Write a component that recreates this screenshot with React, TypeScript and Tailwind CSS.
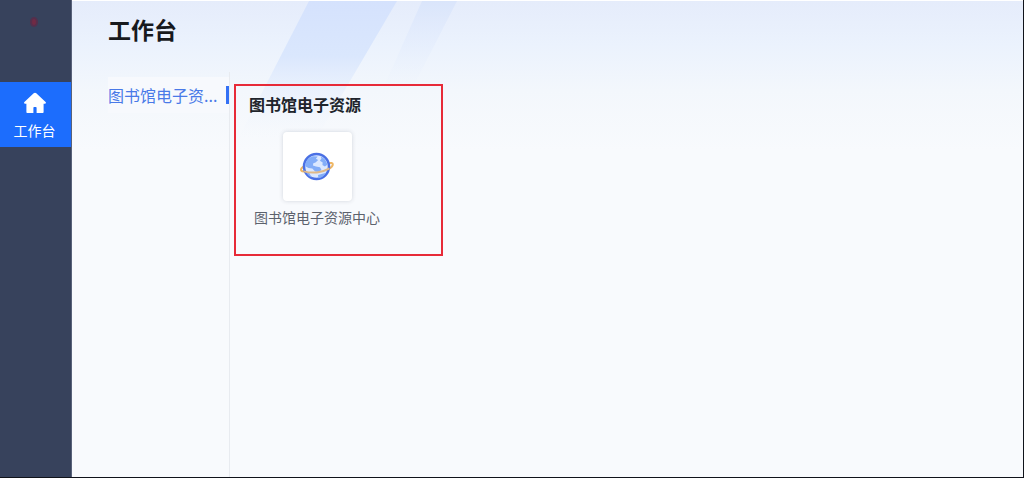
import React, { useState } from 'react';

interface ResourceApp {
  id: string;
  name: string;
  url: string;
}

interface Category {
  id: string;
  name: string;
  apps: ResourceApp[];
}

const CATEGORIES: Category[] = [
  {
    id: 'library',
    name: '图书馆电子资源',
    apps: [{ id: 'library-center', name: '图书馆电子资源中心', url: '#library-center' }]
  }
];

// the side menu only has room for six characters
const shorten = (name: string) => (name.length > 6 ? `${name.slice(0, 6)}...` : name);

const HomeIcon = () => (
  <svg viewBox="0 0 24 22" className="w-6 h-[22px]" fill="currentColor" aria-hidden="true">
    <path d="M12 .8c.5 0 .9.2 1.300.5l9.300 8.800c.7.700.3 1.600-.6 1.600h-1.400v8.300c0 .7-.4 1.100-1.100 1.100h-5.900v-5c0-.6-.4-1-1-1h-1.200c-.6 0-1 .4-1 1v5H4.500c-.7 0-1.100-.4-1.100-1.100v-8.300H2c-.9 0-1.300-.9-.6-1.600l9.300-8.800c.4-.3.800-.5 1.300-.5z" />
  </svg>
);

const GlobeIcon = () => (
  <svg viewBox="0 0 34 30" className="w-[34px] h-[30px]" fill="none" aria-hidden="true">
    <path d="M5 13.500C1.500 15.500.5 17.500 1.300 18.600c.5.700 1.900.9 3.700.8" stroke="#efb765" strokeWidth="2" />
    <path d="M28.500 11.200c2.700-.5 4.200-.1 4.300.8.1 1.700-1.800 3.800-4.600 5.400" stroke="#efb765" strokeWidth="2" />
    <circle cx="16.500" cy="14.500" r="12.500" fill="#dbe8ff" stroke="#4a70e4" strokeWidth="2.500" />
    <path d="M5.500 11c1.300-3.200 4-5.700 7.200-6.800l5 .2-1.800 2.400 2.300 1.100-2.700 2.700-2.200.6-.4 2.300 3.100 1.100 4 .6 1.400 2.500-2.100 2.300-4.200-.4-2.800-3-3.800-.5-3.200-1.800z" fill="#83adf8" />
    <path d="M20.500 4.300c3.600 1.500 6.200 4.600 6.800 8.500l-2.400 1.800-2.500-1.500.3-2.700-2.800-1.700 1.600-2.300z" fill="#83adf8" />
    <path d="M6 19.500l3.200 1.500 2.600 4.500c-2.800-1-4.800-3.100-5.800-6zM18 23l5.500-1.500 2.500-.8c-1.500 3-4.300 5.100-7.600 5.600z" fill="#83adf8" />
    <path d="M4 19.400c7.800 2.200 18 1.500 25.500-3" stroke="#e0b988" strokeWidth="2" />
  </svg>
);

const HeaderArt = () => (
  <svg
    viewBox="0 0 260 150"
    className="absolute left-[164px] top-0 w-[260px] h-[150px] pointer-events-none"
    aria-hidden="true"
  >
    <defs>
      <linearGradient id="wide-band" x1="0" y1="0" x2="0" y2="1">
        <stop offset="0" stopColor="#d5e2fd" />
        <stop offset=".4" stopColor="#dae7fd" />
        <stop offset="1" stopColor="#f3f7fd" stopOpacity="0" />
      </linearGradient>
      <linearGradient id="thin-band" x1="0" y1="0" x2="0" y2="1">
        <stop offset="0" stopColor="#dae5fb" />
        <stop offset="1" stopColor="#eaf2fe" stopOpacity="0" />
      </linearGradient>
    </defs>
    <path d="M73 0h88L80 138H2z" fill="url(#wide-band)" />
    <path d="M186 0h35l-46 90h-29z" fill="url(#thin-band)" />
  </svg>
);

export default function App() {
  const [activeId, setActiveId] = useState('library');
  const active = CATEGORIES.find(c => c.id === activeId) ?? CATEGORIES[0];

  return (
    <div className="flex min-h-screen bg-[#f8fafd] border-r border-b border-[#10131a] font-['Noto_Sans_CJK_SC','Noto_Sans',sans-serif]">
      <aside className="w-[72px] shrink-0 bg-[#37425c] border-r border-[#59627a]">
        <div className="h-[82px] pt-4 pl-[30px]">
          <svg viewBox="0 0 8 12" className="w-2 h-3" aria-hidden="true">
            <ellipse cx="4" cy="6" rx="4" ry="5" fill="#542f4c" />
            <ellipse cx="4" cy="6" rx="2" ry="3" fill="#702b45" />
          </svg>
        </div>
        <nav>
          <a
            href="#workbench"
            aria-current="page"
            className="flex flex-col items-center gap-[6px] h-[65px] pt-[10px] pr-[2px] bg-[#1c6dfd] text-white text-sm leading-5"
          >
            <HomeIcon />
            <span>工作台</span>
          </a>
        </nav>
      </aside>

      <main className="relative flex flex-1 flex-col min-w-0 border-t border-white bg-[linear-gradient(to_bottom,#e5ecfb_0px,#ebf2fd_44px,#f3f7fc_90px,#f8fafd_150px)]">
        <HeaderArt />
        <h1 className="relative h-[71px] pt-3 pl-9 text-[23px] leading-8 font-bold text-[#17191d]">工作台</h1>

        <div className="relative flex flex-1">
          <nav className="w-[158px] shrink-0 pl-9 pt-[5px] border-r border-[#e8ebf0]">
            {CATEGORIES.map(category => (
              <button
                key={category.id}
                type="button"
                title={category.name}
                onClick={() => setActiveId(category.id)}
                className={`flex w-full items-center justify-between h-9 bg-[#f7f9fd] text-base text-left ${
                  category.id === activeId ? 'text-[#4979e8]' : 'text-[#4b5260]'
                }`}
              >
                <span className="whitespace-nowrap">{shorten(category.name)}</span>
                {category.id === activeId && <span className="w-[3px] h-[18px] bg-[#3370f5]" />}
              </button>
            ))}
          </nav>

          <div className="flex-1 min-w-0 pl-1 pt-3">
            <section className="w-[209px] h-[172px] border-2 border-[#e72a38] pt-[6px] pl-[13px]">
              <h2 className="text-base leading-6 font-bold text-[#20242b]">{active.name}</h2>
              <div className="flex flex-wrap pt-4">
                {active.apps.map(app => (
                  <a
                    key={app.id}
                    href={app.url}
                    className="flex flex-col items-center w-[136px] gap-[6px] text-sm leading-5 text-[#5c626d]"
                  >
                    <span className="flex items-center justify-center w-[69px] h-[69px] rounded-sm bg-white shadow-[0_0_4px_rgba(60,70,90,0.2)]">
                      <GlobeIcon />
                    </span>
                    <span className="whitespace-nowrap">{app.name}</span>
                  </a>
                ))}
              </div>
            </section>
          </div>
        </div>
      </main>
    </div>
  );
}
